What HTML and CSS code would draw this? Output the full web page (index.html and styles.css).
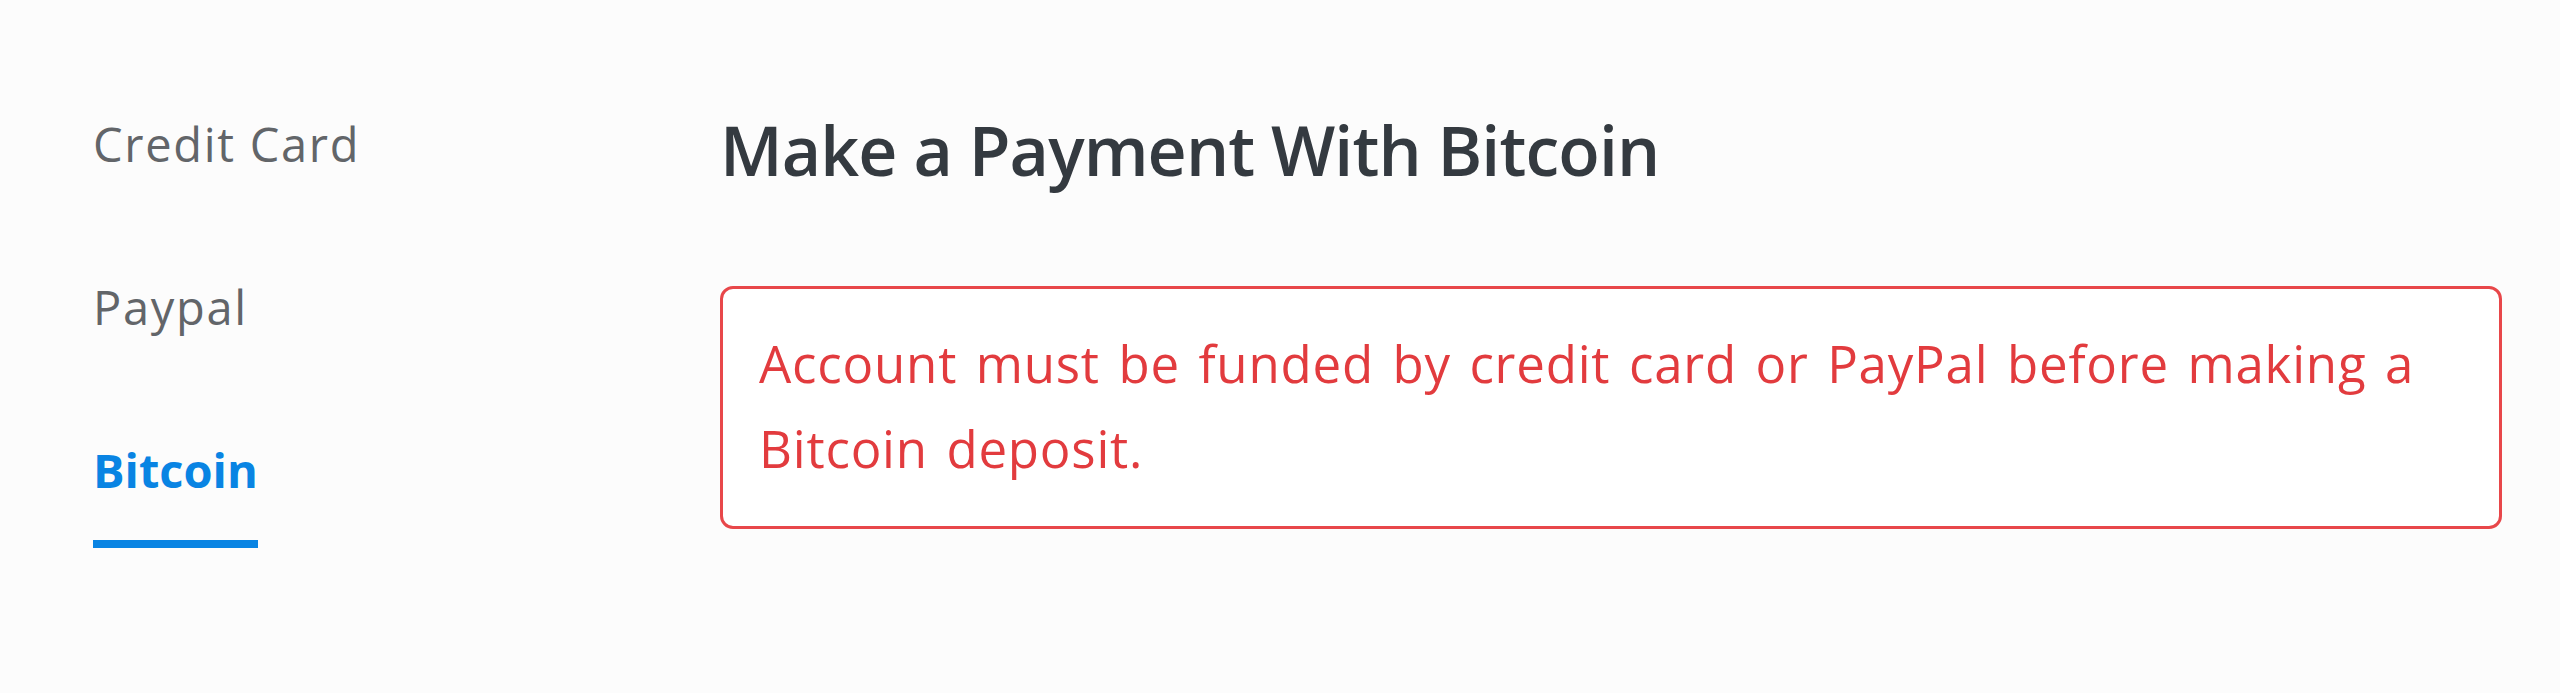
FILE: index.html
```html
<!DOCTYPE html>
<html lang="en">
<head>
<meta charset="utf-8">
<title>Make a Payment With Bitcoin</title>
<link rel="stylesheet" href="styles.css">
</head>
<body>
<main class="page">
  <nav class="methods">
    <a class="method" href="#">Credit Card</a>
    <a class="method" href="#">Paypal</a>
    <a class="method active" href="#">Bitcoin</a>
  </nav>
  <section class="content">
    <h1 class="title">Make a Payment With Bitcoin</h1>
    <div class="alert">
      <p class="alert-text">Account must be funded by credit card or PayPal before making a Bitcoin deposit.</p>
    </div>
  </section>
</main>
</body>
</html>
```
FILE: styles.css
```css
html, body {
  margin: 0;
  padding: 0;
}
body {
  background: #fcfcfc;
  font-family: "Open Sans", "Lato", sans-serif;
  height: 693px;
  overflow: hidden;
}
.page {
  display: flex;
  padding: 110px 58px 0 93px;
}
.methods {
  width: 627px;
  flex: none;
  display: flex;
  flex-direction: column;
  align-items: flex-start;
  gap: 55px;
  padding-top: 4px;
}
.method {
  display: inline-block;
  font-size: 47px;
  line-height: 61px;
  letter-spacing: 1.7px;
  color: #626569;
  text-decoration: none;
  padding-bottom: 39px;
  border-bottom: 8px solid transparent;
}
.method.active {
  color: #0984e3;
  font-weight: 700;
  letter-spacing: 0;
  border-bottom-color: #0984e3;
}
.content {
  flex: 1;
  min-width: 0;
}
.title {
  margin: 0 0 96px;
  font-size: 68px;
  line-height: 80px;
  font-weight: 600;
  letter-spacing: -0.9px;
  color: #343a40;
}
.alert {
  background: #ffffff;
  border: 3px solid #e8474a;
  border-radius: 13px;
  padding: 32px 36px 35px;
}
.alert-text {
  margin: 0;
  font-size: 51px;
  line-height: 85px;
  letter-spacing: 0.8px;
  word-spacing: 4.5px;
  color: #e23b3e;
}
```
